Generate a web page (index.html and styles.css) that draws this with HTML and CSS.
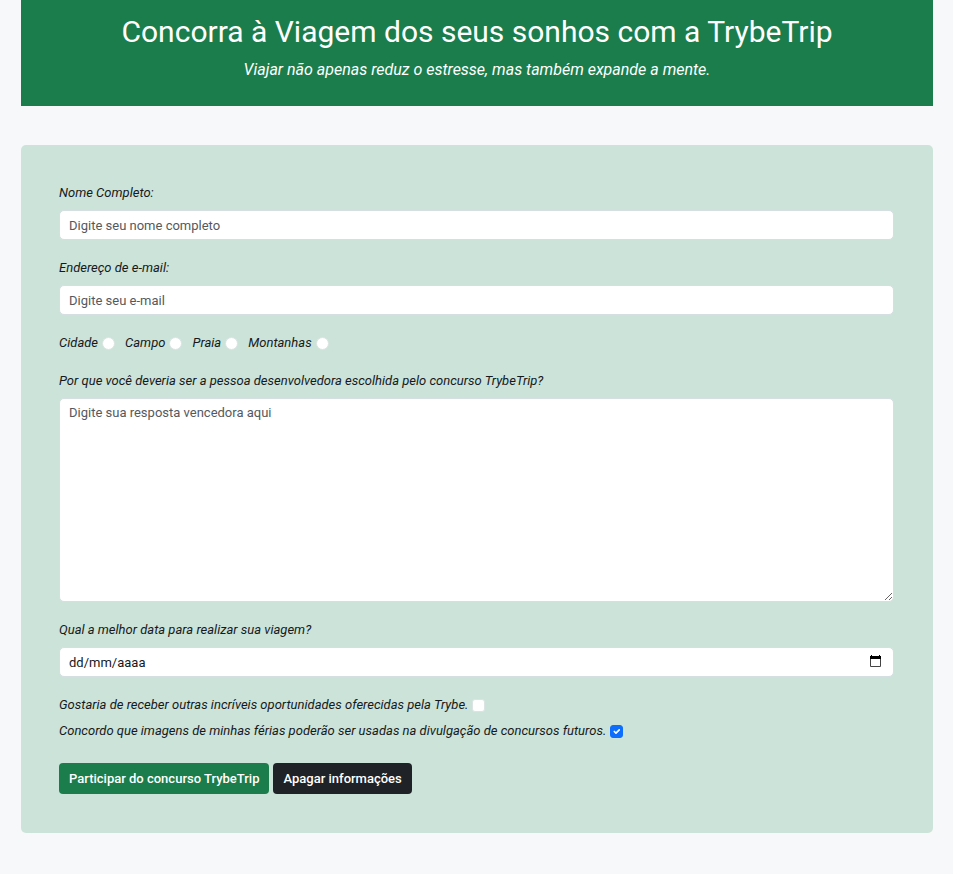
FILE: index.html
```html
<!DOCTYPE html>
<html lang="pt-BR">
<head>
<meta charset="utf-8">
<title>TrybeTrip</title>
<link rel="stylesheet" href="styles.css">
</head>
<body>
<header class="banner">
  <h1>Concorra à Viagem dos seus sonhos com a TrybeTrip</h1>
  <p>Viajar não apenas reduz o estresse, mas também expande a mente.</p>
</header>
<main>
<form class="card">
  <div class="field">
    <label for="name">Nome Completo:</label>
    <input class="control" id="name" type="text" placeholder="Digite seu nome completo">
  </div>
  <div class="field">
    <label for="email">Endereço de e-mail:</label>
    <input class="control" id="email" type="email" placeholder="Digite seu e-mail">
  </div>
  <div class="radios">
    <label>Cidade <input class="check round" type="radio" name="place"></label>
    <label>Campo <input class="check round" type="radio" name="place"></label>
    <label>Praia <input class="check round" type="radio" name="place"></label>
    <label>Montanhas <input class="check round" type="radio" name="place"></label>
  </div>
  <div class="field">
    <label for="answer">Por que você deveria ser a pessoa desenvolvedora escolhida pelo concurso TrybeTrip?</label>
    <textarea class="control answer" id="answer" placeholder="Digite sua resposta vencedora aqui"></textarea>
  </div>
  <div class="field">
    <label for="date">Qual a melhor data para realizar sua viagem?</label>
    <div class="date-box">
      <input class="control date" id="date" type="text" value="dd/mm/aaaa">
      <button class="picker" type="button" aria-label="Abrir calendário">
        <svg width="13" height="13" viewBox="0 0 13 13"><path fill="#444" fill-rule="evenodd" d="M2 1h9a1 1 0 0 1 1 1v9a1 1 0 0 1-1 1H2a1 1 0 0 1-1-1V2a1 1 0 0 1 1-1zM2 4v7h9V4z"/><path fill="#000" d="M2 0h1v1h7V0h1v1h1v3H1V1h1z"/></svg>
      </button>
    </div>
  </div>
  <div class="options">
    <label>Gostaria de receber outras incríveis oportunidades oferecidas pela Trybe. <input class="check" type="checkbox"></label>
    <label>Concordo que imagens de minhas férias poderão ser usadas na divulgação de concursos futuros. <input class="check" type="checkbox" checked></label>
  </div>
  <div class="actions">
    <button class="btn green" type="submit">Participar do concurso TrybeTrip</button>
    <button class="btn dark" type="reset">Apagar informações</button>
  </div>
</form>
</main>
</body>
</html>
```
FILE: styles.css
```css
* { box-sizing: border-box; }
body {
  margin: 0 20px 40px 21px;
  background: #f7f8fa;
  color: #16191c;
  font: 13px/20px Roboto, sans-serif;
}
h1, p { margin: 0; }
.banner {
  padding: 12px 0 24px;
  background: #1a7d4b;
  color: #fff;
  text-align: center;
}
h1 { font-size: 30px; font-weight: 400; line-height: 40px; }
.banner p { margin-top: 5px; font-size: 16px; line-height: 25px; font-style: italic; }
.card {
  display: flex;
  flex-direction: column;
  gap: 18px;
  margin-top: 39px;
  padding: 38px 39px 39px 38px;
  border-radius: 5px;
  background: #cce3d9;
}
label { font-style: italic; }
.field { display: flex; flex-direction: column; gap: 7px; }
.control {
  width: 100%;
  height: 30px;
  padding: 4px 9px;
  border: 1px solid #d5dee0;
  border-radius: 5px;
  background: #fff;
  color: #16191c;
  font: 13px/20px Roboto, sans-serif;
}
.control::placeholder { color: #55595d; opacity: 1; }
.answer { height: 204px; display: block; resize: vertical; }
.radios { display: flex; gap: 10px; }
.radios label, .options label { display: flex; align-items: center; gap: 4px; }
.check {
  appearance: none;
  width: 13px;
  height: 13px;
  margin: 0;
  border: 1px solid #dbe4e2;
  border-radius: 3px;
  background: #fff;
}
.round { border-radius: 50%; }
.check:checked {
  border-color: #0d6efd;
  background: #0d6efd url("data:image/svg+xml,%3csvg xmlns='http://www.w3.org/2000/svg' viewBox='0 0 20 20'%3e%3cpath fill='none' stroke='%23fff' stroke-linecap='round' stroke-linejoin='round' stroke-width='3' d='m6 10 3 3 6-6'/%3e%3c/svg%3e") center / contain;
}
.date-box { position: relative; }
.date { display: block; }
.picker { position: absolute; top: 8px; right: 12px; width: 13px; height: 13px; padding: 0; border: 0; background: none; }
.picker svg { display: block; }
.options { display: flex; flex-direction: column; gap: 6px; padding-bottom: 4px; }
.actions { display: flex; gap: 4px; }
.btn {
  height: 31px;
  padding: 0 10px;
  border: 0;
  border-radius: 4px;
  color: #fff;
  font: 500 13px/20px Roboto, sans-serif;
}
.green { background: #1a7d4b; }
.dark { background: #1f2226; }
```
